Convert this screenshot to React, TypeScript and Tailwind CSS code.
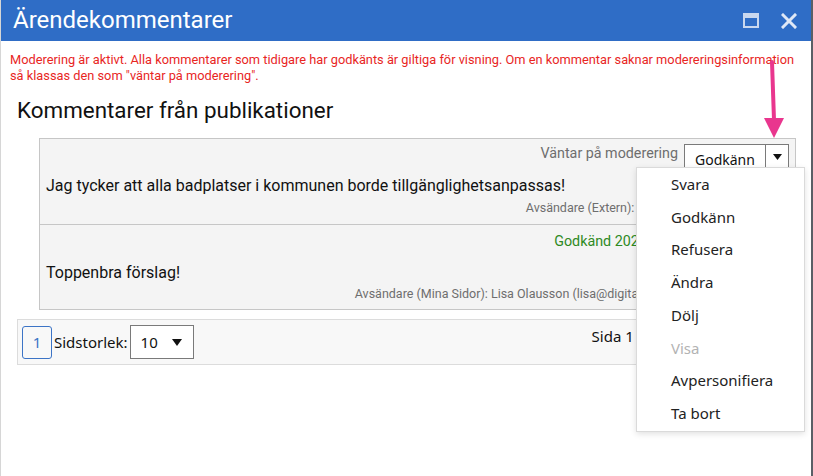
import React from 'react';

const segoe = { fontFamily: '"Noto Sans", "Open Sans", sans-serif' };

function MenuItem({ label, disabled }: { label: string; disabled?: boolean }) {
  return (
    <div className={`h-[32.7px] flex items-center pl-[34px] text-[15px] ${disabled ? 'text-[#b3b3b3]' : 'text-[#222]'}`}>
      {label}
    </div>
  );
}

export default function App() {
  const items = ['Svara', 'Godkänn', 'Refusera', 'Ändra', 'Dölj', 'Visa', 'Avpersonifiera', 'Ta bort'];

  return (
    <div className="w-[813px] h-[476px] bg-[#5a5f66] flex overflow-hidden" style={{ fontFamily: 'Roboto, "Liberation Sans", sans-serif' }}>
      <div className="relative w-[811px] h-full bg-white border-l border-[#d6d6d6] flex flex-col">
        {/* Title bar */}
        <div className="h-[41px] bg-[#2f6dc6] flex items-center pl-[12px] pr-[14px] shrink-0">
          <div className="text-white text-[24px] flex-1 leading-none pb-[2px]">Ärendekommentarer</div>
          <svg width="16" height="15" viewBox="0 0 16 15" className="mr-[22px]">
            <rect x="1" y="1" width="14" height="13" fill="none" stroke="#c9d8ef" strokeWidth="2" />
            <rect x="1" y="1" width="14" height="4" fill="#c9d8ef" />
          </svg>
          <svg width="16" height="16" viewBox="0 0 16 16">
            <path d="M2 2 L14 14 M14 2 L2 14" stroke="#dfe8f6" strokeWidth="3" strokeLinecap="square" />
          </svg>
        </div>

        {/* Info */}
        <div className="pl-[9px] pr-[4px] pt-[11px] text-[12.8px] leading-[16px] text-[#e8261f] whitespace-nowrap">
          Moderering är aktivt. Alla kommentarer som tidigare har godkänts är giltiga för visning. Om en kommentar saknar modereringsinformation
          <br />
          så klassas den som "väntar på moderering".
        </div>

        <div className="pl-[16px] pr-[15px]">
          <h2 className="text-[22.4px] text-[#111] mt-[12px] leading-[28px]">Kommentarer från publikationer</h2>

          {/* Comments */}
          <div className="ml-[22px] mt-[14px] border border-[#c6c6c6] bg-[#f4f4f4]">
            <div className="px-[6px] pt-[5px] border-b border-[#c6c6c6] h-[86px]">
              <div className="flex justify-end items-start gap-[6px]">
                <span className="text-[14.3px] text-[#6e6e6e] leading-[20px] -mt-[1px]">Väntar på moderering</span>
                <div className="flex border border-[#7a7a7a] bg-white h-[27px] text-[14px] text-[#111]" style={segoe}>
                  <span className="px-[10px] pt-[4px] w-[80px]">Godkänn</span>
                  <span className="border-l border-[#7a7a7a] w-[23px] flex justify-center pt-[9px]">
                    <svg width="9" height="6" viewBox="0 0 9 6"><path d="M0 0 H9 L4.5 6 Z" fill="#111" /></svg>
                  </span>
                </div>
              </div>
              <div className="text-[16px] text-[#111] leading-[20px] mt-[5px]">
                Jag tycker att alla badplatser i kommunen borde tillgänglighetsanpassas!
              </div>
              <div className="text-right text-[12.5px] text-[#6e6e6e] leading-[20px] mt-[2px]">
                Avsändare (Extern): Anna Anderson 2020-04-15
              </div>
            </div>
            <div className="px-[6px] pt-[6px] h-[84px]">
              <div className="text-right text-[14.3px] text-[#2e8a1f] leading-[20px]">Godkänd 2020-04-16 10:32 av Admin</div>
              <div className="text-[16px] text-[#111] leading-[20px] mt-[12px]">Toppenbra förslag!</div>
              <div className="text-right text-[12.5px] text-[#6e6e6e] leading-[20px] mt-[1px]">
                Avsändare (Mina Sidor): Lisa Olausson (lisa@digitalforum.se) 2020-04-16 9:32
              </div>
            </div>
          </div>

          {/* Pager */}
          <div className="mt-[9px] h-[46px] border border-[#dcdcdc] bg-[#f8f8f8] flex items-center pl-[4px] text-[15px] text-[#111]" style={segoe}>
            <div className="w-[30px] h-[33px] border border-[#3c74c6] rounded-[3px] flex items-center justify-center text-[#3c74c6]">1</div>
            <span className="ml-[2px]">Sidstorlek:</span>
            <div className="ml-[2px] w-[64px] h-[34px] border border-[#7a7a7a] bg-white flex items-center pl-[10px]">
              <span className="flex-1">10</span>
              <svg width="10" height="7" viewBox="0 0 10 7" className="mr-[11px]"><path d="M0 0 H10 L5 7 Z" fill="#111" /></svg>
            </div>
            <span className="ml-[398px] self-start mt-[6px] leading-[20px]">Sida 1 av 1</span>
          </div>
        </div>

        {/* Dropdown menu */}
        <div className="absolute left-[635px] top-[167px] w-[169px] bg-white border border-[#dadada] shadow-[0_2px_6px_rgba(0,0,0,0.12)] pb-[1px]" style={segoe}>
          {items.map((it) => (
            <MenuItem key={it} label={it} disabled={it === 'Visa'} />
          ))}
        </div>

        {/* Annotation arrow */}
        <svg className="absolute left-[761px] top-[58px]" width="24" height="82" viewBox="0 0 24 82">
          <path d="M10 4 L12 62" stroke="#e9368e" strokeWidth="4" strokeLinecap="round" />
          <path d="M2 60 L22 60 L12 80 Z" fill="#e9368e" />
        </svg>
      </div>
    </div>
  );
}
